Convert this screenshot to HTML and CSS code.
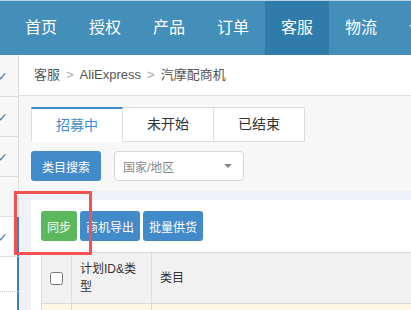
FILE: index.html
```html
<!DOCTYPE html>
<html lang="zh-CN">
<head>
    <meta charset="UTF-8">
    <meta name="viewport" content="width=device-width, initial-scale=1.0">
    <title>客服 - 汽摩配商机</title>
    <link rel="stylesheet" href="styles.css">
</head>
<body>
    <div class="page">
        <div class="topnav">
            <a class="nav-item">首页</a>
            <a class="nav-item">授权</a>
            <a class="nav-item">产品</a>
            <a class="nav-item">订单</a>
            <a class="nav-item active">客服</a>
            <a class="nav-item">物流</a>
            <a class="nav-item">个人</a>
        </div>

        <div class="layout">
            <!-- 左侧菜单（被截掉一部分） -->
            <div class="sidebar">
                <div class="side-row first"><svg class="tick" viewBox="0 0 10 8"><polyline points="1,4 4,7 9,1"/></svg></div>
                <div class="side-row"><svg class="tick" viewBox="0 0 10 8"><polyline points="1,4 4,7 9,1"/></svg></div>
                <div class="side-row"><svg class="tick" viewBox="0 0 10 8"><polyline points="1,4 4,7 9,1"/></svg></div>
                <div class="side-row"></div>
                <div class="side-row current"><svg class="tick" viewBox="0 0 10 8"><polyline points="1,4 4,7 9,1"/></svg></div>
                <div class="side-row current dotted"></div>
                <div class="side-row current last"></div>
            </div>

            <div class="main">
                <div class="crumb">
                    客服<span class="sep">&gt;</span>AliExpress<span class="sep">&gt;</span>汽摩配商机
                </div>

                <div class="filter">
                    <ul class="tabs">
                        <li class="tab active">招募中</li>
                        <li class="tab">未开始</li>
                        <li class="tab">已结束</li>
                    </ul>
                    <div class="search-row">
                        <button class="btn btn-blue wide">类目搜索</button>
                        <div class="select">
                            <span>国家/地区</span>
                            <span class="caret"></span>
                        </div>
                    </div>
                </div>

                <div class="card">
                    <div class="toolbar">
                        <button class="btn btn-green">同步</button>
                        <button class="btn btn-blue">商机导出</button>
                        <button class="btn btn-blue">批量供货</button>
                    </div>
                    <table class="grid">
                        <thead>
                            <tr>
                                <th class="col-check"><input type="checkbox"></th>
                                <th class="col-id">计划ID&amp;类型</th>
                                <th class="col-cat">类目</th>
                            </tr>
                        </thead>
                        <tbody>
                            <tr class="warn">
                                <td></td><td></td><td></td>
                            </tr>
                        </tbody>
                    </table>
                </div>
            </div>
        </div>

        <!-- 标注框 -->
        <div class="mark"></div>
    </div>
</body>
</html>
```

FILE: styles.css
```css
body {
    margin: 0;
    font-family: "Liberation Sans", "Noto Sans CJK SC", sans-serif;
    color: #333;
    background: #fff;
    overflow: hidden;
}
.page {
    position: relative;
    width: 1000px;
}
.topnav {
    height: 54px;
    border-top: 1px solid #b9d3e4;
    background: #448eba;
    padding-left: 9px;
    display: flex;
    white-space: nowrap;
}
.nav-item {
    width: 64px;
    text-align: center;
    line-height: 54px;
    font-size: 16px;
    color: #fff;
}
.nav-item.active {
    background: #2f7cab;
}
.layout {
    display: flex;
}
.sidebar {
    width: 19px;
    flex-shrink: 0;
}
.side-row {
    height: 39px;
    background: #f7f7f7;
    border-bottom: 1px solid #ddd;
    border-right: 1px solid #ddd;
    box-sizing: content-box;
    display: flex;
    align-items: center;
    overflow: hidden;
}
.side-row.first {
    height: 41px;
}
.side-row.current {
    background: #fff;
    border-right: 2px solid #3a7fbf;
    width: 17px;
}
.side-row.dotted {
    height: 34px;
    border-bottom: 1px dotted #ccc;
}
.side-row.last {
    border-bottom: none;
    height: 60px;
}
.tick {
    width: 9px;
    height: 8px;
    margin-left: -3px;
    fill: none;
    stroke: #4a7fae;
    stroke-width: 1.4;
}
.main {
    flex: 1;
    background: #eef1f5;
}
.crumb {
    height: 41px;
    line-height: 40px;
    background: #fff;
    border-bottom: 1px solid #ddd;
    box-sizing: border-box;
    padding-left: 15px;
    font-size: 13px;
    color: #555;
}
.sep {
    color: #aaa;
    padding: 0 6px;
}
.filter {
    background: #f7f7f7;
    padding: 11px 12px 10px;
}
.tabs {
    list-style: none;
    margin: 0;
    padding: 0;
    display: flex;
}
.tab {
    width: 90px;
    height: 33px;
    line-height: 33px;
    text-align: center;
    font-size: 14px;
    background: #fff;
    border: 1px solid #ddd;
    border-left: none;
}
.tab:first-child {
    border-left: 1px solid #ddd;
}
.tab.active {
    color: #428bca;
    border-top: 2px solid #428bca;
    height: 32px;
    line-height: 32px;
    border-bottom-color: #fff;
}
.search-row {
    display: flex;
    align-items: center;
    gap: 13px;
    margin-top: 9px;
}
.btn {
    height: 30px;
    padding: 0 6px;
    border: none;
    border-radius: 3px;
    font-family: inherit;
    font-size: 12px;
    color: #fff;
}
.btn.wide {
    padding: 0 11px;
}
.btn-blue {
    background: #428bca;
}
.btn-green {
    background: #5cb85c;
}
.select {
    width: 109px;
    height: 28px;
    border: 1px solid #d5d5d5;
    border-radius: 4px;
    background: #fff;
    display: flex;
    align-items: center;
    justify-content: space-between;
    padding: 0 11px 0 8px;
    box-sizing: content-box;
    font-size: 12px;
    color: #888;
}
.caret {
    border-top: 4px solid #888;
    border-left: 4px solid transparent;
    border-right: 4px solid transparent;
}
.card {
    margin: 9px 12px 0;
    background: #fff;
    padding: 11px 10px 40px;
}
.toolbar {
    display: flex;
    gap: 3px;
}
.grid {
    margin-top: 11px;
    width: 100%;
    border-collapse: collapse;
    font-size: 12px;
}
.grid th {
    background: #f1f1f1;
    border: 1px solid #ddd;
    height: 50px;
    padding: 0 8px;
    text-align: left;
    font-weight: normal;
    line-height: 18px;
}
.grid .col-check {
    width: 30px;
    padding: 0;
    text-align: center;
    box-sizing: border-box;
}
.col-check input {
    margin: 0;
    width: 13px;
    height: 13px;
    vertical-align: middle;
}
.grid .col-id {
    width: 63px;
}
.grid .warn td {
    background: #fcf8e3;
    border: 1px solid #ddd;
    height: 40px;
}
.mark {
    position: absolute;
    left: 14px;
    top: 191px;
    width: 72px;
    height: 58px;
    border: 3px solid #f25252;
}
```
